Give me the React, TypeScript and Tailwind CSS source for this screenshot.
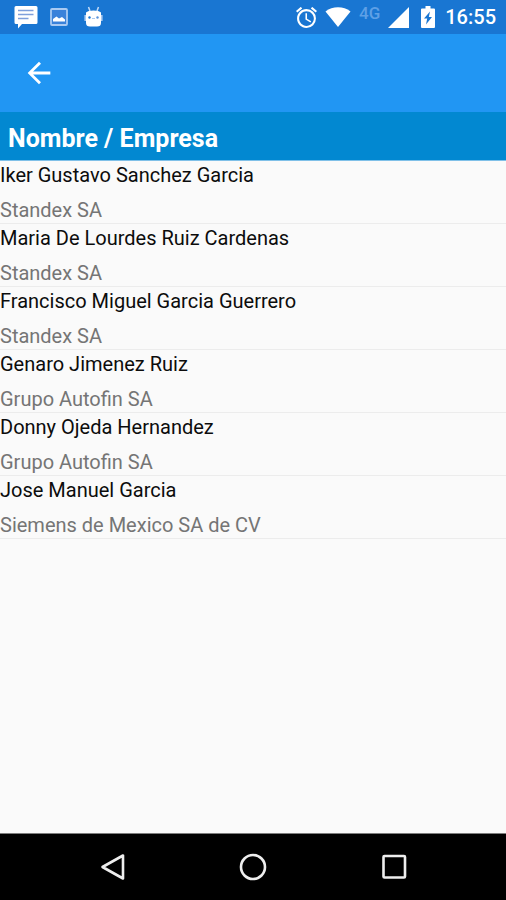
import React from 'react';

const contacts = [
  { id: 1, name: "Iker Gustavo Sanchez Garcia", company: "Standex SA" },
  { id: 2, name: "Maria De Lourdes Ruiz Cardenas", company: "Standex SA" },
  { id: 3, name: "Francisco Miguel Garcia Guerrero", company: "Standex SA" },
  { id: 4, name: "Genaro Jimenez Ruiz", company: "Grupo Autofin SA" },
  { id: 5, name: "Donny Ojeda Hernandez", company: "Grupo Autofin SA" },
  { id: 6, name: "Jose Manuel Garcia", company: "Siemens de Mexico SA de CV" }
];

const StatusBar: React.FC = () => (
  <div className="bg-[#1976d2] h-[34px] pl-3.5 pr-2.5 flex items-center justify-between text-white">
    <div className="flex items-center gap-3">
      {/* Message */}
      <svg className="w-6 h-6" viewBox="0 0 24 24" fill="none">
        <path d="M2 1h20q1.500 0 1.500 1.500v15q0 1.500-1.500 1.500H8l-4 4.500V19H2q-1.500 0-1.500-1.500v-15Q.5 1 2 1z" fill="#fff" />
        <path d="M4 5.500h15.500M4 9.500h15.500M4 13.500h10.500" stroke="#7f9fdb" strokeWidth="1.600" />
      </svg>
      {/* Image */}
      <svg className="w-[18px] h-[18px]" viewBox="0 0 18 18" fill="none">
        <rect x="1" y="1" width="16" height="16" rx="1" fill="#3a82da" stroke="#a9caf2" strokeWidth="1.800" />
        <path d="M3 13.500V11l3.500-2.500 2.500 2 3-1.500 3 2.500v2z" fill="#fff" />
      </svg>
      {/* Android head */}
      <svg className="ml-1 w-[19px] h-[22px]" viewBox="0 0 19 22" fill="none">
        <path d="M4.500 1l1.500 4M14.500 1L13 5" stroke="#c5dbf7" strokeWidth="1.500" />
        <path d="M2 6.500Q4 4.500 9.500 4.500t7.500 2V17q0 3.500-4 3.500H6Q2 20.500 2 17z" fill="#fff" />
        <path d="M1.200 9v6M17.800 9v6" stroke="#a9caf2" strokeWidth="1.600" />
        <circle cx="5.500" cy="11.500" r="1.200" fill="#1976d2" />
        <circle cx="13.500" cy="11.500" r="1.200" fill="#5b93dc" />
        <path d="M8 12.500h3" stroke="#a9caf2" />
      </svg>
    </div>
    <div className="flex items-center">
      {/* Alarm */}
      <svg className="w-[21px] h-[21px]" viewBox="2 2 20 20" fill="currentColor">
        <path d="M22 5.720l-4.600-3.860-1.290 1.530 4.600 3.860L22 5.720zM7.880 3.390L6.600 1.860 2 5.710l1.290 1.530 4.590-3.850zM12.500 8H11v6l4.750 2.850.75-1.230-4-2.370V8zM12 4c-4.970 0-9 4.030-9 9s4.020 9 9 9a9 9 0 000-18zm0 16c-3.870 0-7-3.130-7-7s3.130-7 7-7 7 3.130 7 7-3.130 7-7 7z" />
      </svg>
      {/* Wifi */}
      <svg className="ml-2 w-[26px] h-5" viewBox="0 0 26 20" fill="currentColor">
        <path d="M.5 4.500Q6 .3 13 .3t12.500 4.200L13 20z" />
      </svg>
      <span className="ml-2 mb-2 text-[17px] leading-4 font-medium text-[#5ea0e6]">4G</span>
      {/* Signal */}
      <svg className="ml-2 w-[21px] h-[21px]" viewBox="0 0 21 21" fill="currentColor">
        <path d="M0 21L21 0v21z" />
      </svg>
      {/* Battery */}
      <svg className="ml-3 w-3.5 h-[22px]" viewBox="0 0 14 22">
        <path d="M4.500 0h5v2.500H13q1 0 1 1V21q0 1-1 1H1q-1 0-1-1V3.500q0-1 1-1h3.500z" fill="#fff" />
        <path d="M9 5.500L3 12.500h3.200L5 18.500l6-7.500H7.800z" fill="#1976d2" />
      </svg>
      <span className="ml-2.5 text-xl leading-6 font-medium">16:55</span>
    </div>
  </div>
);

const NavigationBar: React.FC = () => (
  <nav className="bg-black border-t border-[#7d7d7d] h-[67px] px-[42px] flex items-center">
    <button aria-label="Atrás" className="flex-1 flex justify-center">
      <svg className="w-7 h-7" viewBox="0 0 28 28" fill="none" stroke="#eee" strokeWidth="2.600" strokeLinejoin="round">
        <path d="M25 2.500v23L4.500 14z" />
      </svg>
    </button>
    <button aria-label="Inicio" className="flex-1 flex justify-center">
      <svg className="w-7 h-7" viewBox="0 0 28 28" fill="none" stroke="#eee" strokeWidth="2.600">
        <circle cx="14" cy="14" r="12" />
      </svg>
    </button>
    <button aria-label="Recientes" className="flex-1 flex justify-center">
      <svg className="w-7 h-7" viewBox="0 0 28 28" fill="none" stroke="#eee" strokeWidth="2.600" strokeLinejoin="round">
        <rect x="3.500" y="3" width="21.500" height="21.500" rx="1" />
      </svg>
    </button>
  </nav>
);

const App: React.FC = () => {
  return (
    <div className="min-h-screen flex flex-col bg-[#fafafa] font-[Roboto,sans-serif]">
      <StatusBar />

      <header className="bg-[#2196f3] h-[78px] px-[22px] flex items-center">
        <button aria-label="Volver" className="text-white">
          <svg className="w-[34px] h-[34px]" viewBox="0 0 24 24" fill="currentColor">
            <path d="M20 11H7.830l5.590-5.590L12 4l-8 8 8 8 1.410-1.410L7.830 13H20v-2z" />
          </svg>
        </button>
      </header>

      <main className="flex-grow">
        <h1 className="bg-[#0288d1] px-2 pt-3 pb-1.5 border-b border-[#7fc0e8] text-[25px] leading-[30px] font-bold text-white">
          Nombre / Empresa
        </h1>
        <ul>
          {contacts.map((contact) => (
            <li key={contact.id} className="pt-0.5 pb-px flex flex-col gap-[11px] border-b border-[#ececec] text-xl leading-6">
              <span className="text-[#0c0c0c]">{contact.name}</span>
              <span className="text-[#757575]">{contact.company}</span>
            </li>
          ))}
        </ul>
      </main>

      <NavigationBar />
    </div>
  );
};

export default App;
